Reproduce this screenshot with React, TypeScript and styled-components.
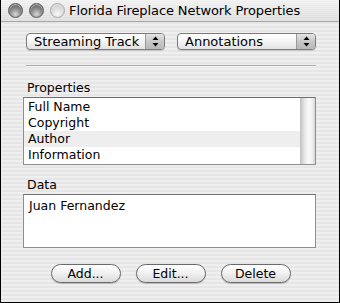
import React from "react";
import styled, { createGlobalStyle } from "styled-components";

const GlobalStyle = createGlobalStyle`
  html, body {
    margin: 0;
    padding: 0;
    background: #ffffff;
  }
  * {
    box-sizing: border-box;
  }
`;

const FONT = `"DejaVu Sans", "Liberation Sans", sans-serif`;

const Window = styled.div`
  width: 340px;
  height: 303px;
  display: flex;
  flex-direction: column;
  border: 1px solid #000;
  border-top: none;
  font-family: ${FONT};
  color: #000;
  background: repeating-linear-gradient(
    to bottom,
    #efefef 0px,
    #efefef 2px,
    #e6e6e6 2px,
    #e6e6e6 4px
  );
  overflow: hidden;
`;

const TitleBar = styled.div`
  height: 22px;
  display: flex;
  align-items: center;
  padding-left: 7px;
  gap: 6px;
  border-bottom: 1px solid #a4a4a4;
  background: repeating-linear-gradient(
      to bottom,
      rgba(255, 255, 255, 0.25) 0px,
      rgba(255, 255, 255, 0.25) 1px,
      rgba(0, 0, 0, 0) 1px,
      rgba(0, 0, 0, 0) 2px
    ),
    linear-gradient(to bottom, #f0f0f0, #dcdcdc);
`;

const Light = styled.span<{ $dim?: boolean }>`
  width: 15px;
  height: 15px;
  border-radius: 50%;
  flex: none;
  border: 1px solid ${(p) => (p.$dim ? "#a8a8a8" : "#5a5a5a")};
  background: ${(p) =>
    p.$dim
      ? "radial-gradient(circle at 50% 75%, #fafafa 0%, #dedede 45%, #c4c4c4 100%)"
      : "radial-gradient(circle at 50% 78%, #d8d8d8 0%, #8c8c8c 45%, #4a4a4a 100%)"};
  box-shadow: inset 0 1px 1px rgba(255, 255, 255, 0.6);
`;

const Title = styled.span`
  font-size: 13px;
  margin-left: -2px;
  white-space: nowrap;
  letter-spacing: -0.1px;
`;

const Body = styled.div`
  flex: 1;
  display: flex;
  flex-direction: column;
  padding: 11px 23px 0 22px;
`;

const PopupRow = styled.div`
  display: flex;
  gap: 12px;
  padding-left: 3px;
`;

const Popup = styled.div<{ $w: number }>`
  width: ${(p) => p.$w}px;
  height: 17px;
  display: flex;
  border: 1px solid #7c7c7c;
  border-radius: 4px;
  background: linear-gradient(to bottom, #ffffff 0%, #f4f4f4 50%, #e2e2e2 100%);
  box-shadow: 0 1px 1px rgba(0, 0, 0, 0.15);
  overflow: hidden;
`;

const PopupText = styled.span`
  flex: 1;
  font-size: 13px;
  line-height: 15px;
  padding-left: 7px;
  white-space: nowrap;
`;

const Stepper = styled.span`
  width: 19px;
  display: flex;
  align-items: center;
  justify-content: center;
  border-left: 1px solid #9a9a9a;
  background: linear-gradient(to bottom, #e4e4e4 0%, #c8c8c8 50%, #b8b8b8 100%);
`;

const Separator = styled.div`
  margin: 15px 0 0 3px;
  height: 2px;
  background: #a9a9a9;
  border-bottom: 1px solid #f6f6f6;
`;

const Label = styled.div<{ $top: number }>`
  font-size: 12.5px;
  margin: ${(p) => p.$top}px 0 2px 4px;
  line-height: 15px;
`;

const ListBox = styled.div`
  height: 68px;
  display: flex;
  border: 1px solid #8e8e8e;
  border-top-color: #6e6e6e;
  background: #fff;
`;

const Rows = styled.div`
  flex: 1;
  display: flex;
  flex-direction: column;
  padding-top: 1px;
`;

const Row = styled.div<{ $alt?: boolean }>`
  height: 16px;
  font-size: 12.5px;
  line-height: 16px;
  padding-left: 4px;
  background: ${(p) => (p.$alt ? "#eeeeee" : "transparent")};
`;

const ScrollTrack = styled.div`
  width: 15px;
  border-left: 1px solid #c4c4c4;
  background: linear-gradient(
    to right,
    #c8c8c8 0%,
    #e6e6e6 25%,
    #fbfbfb 55%,
    #f0f0f0 80%,
    #d6d6d6 100%
  );
`;

const DataBox = styled.div`
  height: 54px;
  border: 1px solid #8e8e8e;
  border-top-color: #6e6e6e;
  background: #fff;
  font-size: 12.5px;
  line-height: 16px;
  padding: 3px 0 0 5px;
`;

const ButtonRow = styled.div`
  display: flex;
  justify-content: center;
  gap: 15px;
  margin-top: 16px;
  padding-left: 2px;
`;

const Button = styled.div`
  width: 70px;
  height: 19px;
  display: flex;
  align-items: center;
  justify-content: center;
  font-size: 12.5px;
  border: 1px solid #6a6a6a;
  border-radius: 10px;
  background: linear-gradient(to bottom, #ffffff 0%, #f2f2f2 45%, #dadada 100%);
  box-shadow: 0 1px 1px rgba(0, 0, 0, 0.2);
`;

const Arrows = () => (
  <svg width="7" height="11" viewBox="0 0 7 11">
    <path d="M3.5 0.5 L6.5 4 L0.5 4 Z" fill="#000" />
    <path d="M3.5 10.5 L6.5 7 L0.5 7 Z" fill="#000" />
  </svg>
);

export default function App() {
  const rows = ["Full Name", "Copyright", "Author", "Information"];
  return (
    <>
      <GlobalStyle />
      <Window>
        <TitleBar>
          <Light />
          <Light />
          <Light $dim />
          <Title>Florida Fireplace Network Properties</Title>
        </TitleBar>
        <Body>
          <PopupRow>
            <Popup $w={140}>
              <PopupText>Streaming Track</PopupText>
              <Stepper>
                <Arrows />
              </Stepper>
            </Popup>
            <Popup $w={140}>
              <PopupText>Annotations</PopupText>
              <Stepper>
                <Arrows />
              </Stepper>
            </Popup>
          </PopupRow>
          <Separator />
          <Label $top={13}>Properties</Label>
          <ListBox>
            <Rows>
              {rows.map((r) => (
                <Row key={r} $alt={r === "Author"}>
                  {r}
                </Row>
              ))}
            </Rows>
            <ScrollTrack />
          </ListBox>
          <Label $top={12}>Data</Label>
          <DataBox>Juan Fernandez</DataBox>
          <ButtonRow>
            <Button>Add...</Button>
            <Button>Edit...</Button>
            <Button>Delete</Button>
          </ButtonRow>
        </Body>
      </Window>
    </>
  );
}
